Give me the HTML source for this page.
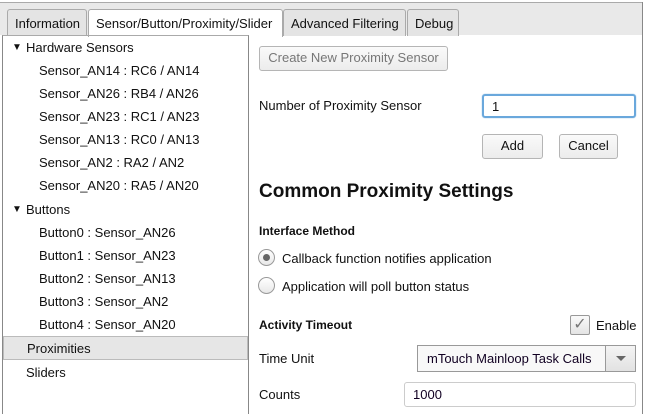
<!DOCTYPE html>
<html><head><style>
*{box-sizing:border-box;margin:0;padding:0}
body{width:656px;height:414px;overflow:hidden;background:#fff;font-family:"Liberation Sans",sans-serif;font-size:13px;color:#111;position:relative}
.a{position:absolute;white-space:nowrap}
.tabbar{position:absolute;left:0;top:2px;width:643px;height:33px;background:#e9e9e9;border-top:1px solid #aaa;border-right:1px solid #888}
.tab{position:absolute;top:9px;height:27px;border:1px solid #aaa;border-bottom:none;border-radius:3px 3px 0 0;background:#e4e4e4;padding:6px 7px 0;font-size:13px;white-space:nowrap;overflow:hidden}
.left{position:absolute;left:2px;top:35px;width:247px;height:379px;border:1px solid #888;border-bottom:none;border-top:1px solid #aaa}
.btn{position:absolute;border:1px solid #b5b5b5;border-radius:3px;background:linear-gradient(#fafafa,#ececec);text-align:center;line-height:22px;white-space:nowrap}
.rad{position:absolute;width:17px;height:17px;border-radius:50%;border:1px solid #999;background:linear-gradient(#fff,#e8e8e8)}
</style></head><body>
<div class="tabbar"></div>
<div style="position:absolute;left:642px;top:2px;width:1px;height:412px;background:#888"></div>
<div class="tab" style="left:7px;width:80px">Information</div>
<div class="tab" style="left:88px;width:195px;background:#fff;height:28px">Sensor/Button/Proximity/Slider</div>
<div class="tab" style="left:283px;width:123px">Advanced Filtering</div>
<div class="tab" style="left:407px;width:52px">Debug</div>
<div class="left">
<div style="position:absolute;left:0;top:300px;width:245px;height:24px;background:#e6e6e6;border:1px solid #bbb"></div>
</div>
<div class="a" style="left:12px;top:42px;font-size:10px">▼</div>
<div class="a" style="left:26px;top:40px">Hardware Sensors</div>
<div class="a" style="left:39px;top:63px">Sensor_AN14 : RC6 / AN14</div>
<div class="a" style="left:39px;top:86px">Sensor_AN26 : RB4 / AN26</div>
<div class="a" style="left:39px;top:109px">Sensor_AN23 : RC1 / AN23</div>
<div class="a" style="left:39px;top:132px">Sensor_AN13 : RC0 / AN13</div>
<div class="a" style="left:39px;top:155px">Sensor_AN2 : RA2 / AN2</div>
<div class="a" style="left:39px;top:178px">Sensor_AN20 : RA5 / AN20</div>
<div class="a" style="left:12px;top:204px;font-size:10px">▼</div>
<div class="a" style="left:26px;top:202px">Buttons</div>
<div class="a" style="left:39px;top:225px">Button0 : Sensor_AN26</div>
<div class="a" style="left:39px;top:248px">Button1 : Sensor_AN23</div>
<div class="a" style="left:39px;top:271px">Button2 : Sensor_AN13</div>
<div class="a" style="left:39px;top:294px">Button3 : Sensor_AN2</div>
<div class="a" style="left:39px;top:317px">Button4 : Sensor_AN20</div>
<div class="a" style="left:27px;top:341px">Proximities</div>
<div class="a" style="left:26px;top:365px">Sliders</div>

<div class="btn" style="left:259px;top:46px;width:189px;height:25px;color:#777">Create New Proximity Sensor</div>
<div class="a" style="left:259px;top:98px">Number of Proximity Sensor</div>
<div class="a" style="left:482px;top:94px;width:154px;height:24px;border:2px solid #6aa8dc;border-radius:3px;padding:3px 8px;box-shadow:0 0 1px #6aa8dc">1</div>
<div class="btn" style="left:482px;top:134px;width:61px;height:25px">Add</div>
<div class="btn" style="left:559px;top:134px;width:59px;height:25px">Cancel</div>
<div class="a" style="left:259px;top:181px;font-size:19px;font-weight:bold">Common Proximity Settings</div>
<div class="a" style="left:259px;top:224px;font-weight:bold;font-size:12px">Interface Method</div>
<div class="rad" style="left:258px;top:249px"><div style="position:absolute;left:4px;top:4px;width:7px;height:7px;border-radius:50%;background:#666"></div></div>
<div class="a" style="left:282px;top:251px">Callback function notifies application</div>
<div class="rad" style="left:258px;top:277px"></div>
<div class="a" style="left:282px;top:279px">Application will poll button status</div>
<div class="a" style="left:259px;top:318px;font-weight:bold;font-size:12px">Activity Timeout</div>
<div class="a" style="left:570px;top:315px;width:20px;height:20px;border:1px solid #999;border-radius:2px;background:linear-gradient(#fafafa,#e4e4e4);color:#777;font-size:16px;line-height:18px;text-align:center">✓</div>
<div class="a" style="left:596px;top:318px">Enable</div>
<div class="a" style="left:259px;top:351px">Time Unit</div>
<div class="a" style="left:417px;top:345px;width:219px;height:27px;border:1px solid #999;background:#f8f8f8;padding:5px 9px;color:#102">mTouch Mainloop Task Calls</div>
<div class="a" style="left:605px;top:345px;width:31px;height:27px;border:1px solid #999;background:linear-gradient(#f4f4f4,#e2e2e2)"><div style="position:absolute;left:10px;top:10px;border-left:5px solid transparent;border-right:5px solid transparent;border-top:5px solid #666"></div></div>
<div class="a" style="left:259px;top:387px">Counts</div>
<div class="a" style="left:404px;top:382px;width:232px;height:25px;border:1px solid #ccc;border-radius:3px;padding:4px 8px;color:#102">1000</div>
</body></html>
